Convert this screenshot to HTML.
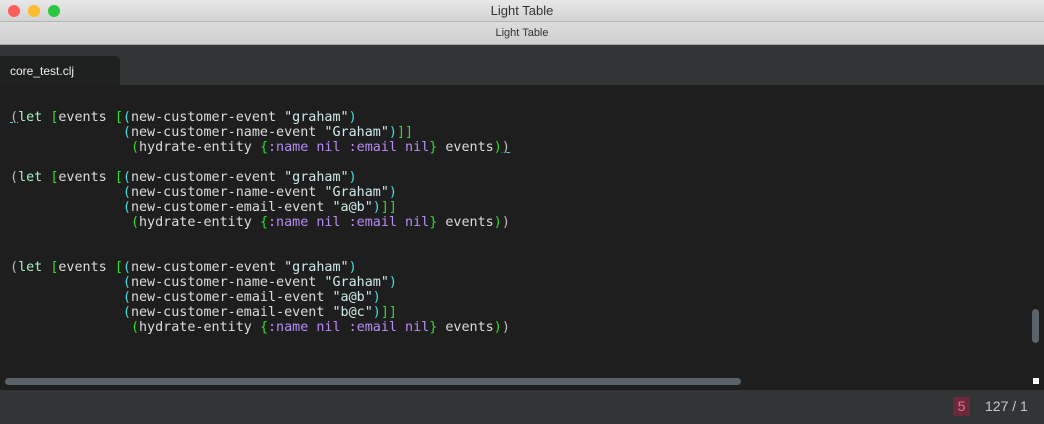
<!DOCTYPE html>
<html><head><style>
*{margin:0;padding:0;box-sizing:border-box}
body{width:1044px;height:424px;overflow:hidden;background:#1e1e1e;font-family:"Liberation Sans",sans-serif;position:relative}
.t1{position:absolute;left:0;top:0;width:1044px;height:22px;background:linear-gradient(#e8e8e8,#d3d3d3);border-bottom:1px solid #b5b5b5;text-align:center;font-size:13px;line-height:22px;color:#333}
.t2{position:absolute;left:0;top:22px;width:1044px;height:23px;background:linear-gradient(#dcdcdc,#cfcfcf);border-bottom:1px solid #a8a8a8;text-align:center;font-size:11px;line-height:23px;color:#333}
.dot{position:absolute;top:5px;width:12px;height:12px;border-radius:50%}
.tabbar{position:absolute;left:0;top:45px;width:1044px;height:40px;background:#313536}
.tab{position:absolute;left:0;top:11px;width:120px;height:29px;background:#1f2020;border-radius:0 5px 0 0;color:#eee;font-size:12px;padding:8px 0 0 10px}
.code{position:absolute;left:10px;top:110px;font-family:"DejaVu Sans Mono",monospace;font-size:13.4px;line-height:15px;color:#dcdcdc;white-space:pre}
.g{color:#2fdc2f}.c{color:#3fe0e0}.l{color:#a6f0c4}.s{color:#cfeaea}.p{color:#b88cf5}.w{color:#bbb}
.status{position:absolute;left:0;top:390px;width:1044px;height:34px;background:#313536}
</style></head><body>
<div class="t1">Light Table
<div class="dot" style="left:8px;background:#fc5f57"></div>
<div class="dot" style="left:28px;background:#fdbc2e"></div>
<div class="dot" style="left:48px;background:#29c840"></div></div>
<div class="t2">Light Table</div>
<div class="tabbar"><div class="tab">core_test.clj</div></div>
<div class="code"><span class="w" style="text-decoration:underline;text-decoration-color:#3fe0e0">(</span><span class="l">let</span> <span class="g">[</span>events <span class="g">[</span><span class="c">(</span>new-customer-event <span class="s">"graham"</span><span class="c">)</span>
              <span class="c">(</span>new-customer-name-event <span class="s">"Graham"</span><span class="c">)</span><span class="g">]]</span>
               <span class="g">(</span>hydrate-entity <span class="g">{</span><span class="p">:name nil :email nil</span><span class="g">}</span> events<span class="g">)</span><span class="w" style="text-decoration:underline;text-decoration-color:#3fe0e0">)</span>

<span class="w">(</span><span class="l">let</span> <span class="g">[</span>events <span class="g">[</span><span class="c">(</span>new-customer-event <span class="s">"graham"</span><span class="c">)</span>
              <span class="c">(</span>new-customer-name-event <span class="s">"Graham"</span><span class="c">)</span>
              <span class="c">(</span>new-customer-email-event <span class="s">"a@b"</span><span class="c">)</span><span class="g">]]</span>
               <span class="g">(</span>hydrate-entity <span class="g">{</span><span class="p">:name nil :email nil</span><span class="g">}</span> events<span class="g">)</span><span class="w">)</span>


<span class="w">(</span><span class="l">let</span> <span class="g">[</span>events <span class="g">[</span><span class="c">(</span>new-customer-event <span class="s">"graham"</span><span class="c">)</span>
              <span class="c">(</span>new-customer-name-event <span class="s">"Graham"</span><span class="c">)</span>
              <span class="c">(</span>new-customer-email-event <span class="s">"a@b"</span><span class="c">)</span>
              <span class="c">(</span>new-customer-email-event <span class="s">"b@c"</span><span class="c">)</span><span class="g">]]</span>
               <span class="g">(</span>hydrate-entity <span class="g">{</span><span class="p">:name nil :email nil</span><span class="g">}</span> events<span class="g">)</span><span class="w">)</span></div>
<div style="position:absolute;left:5px;top:378px;width:736px;height:7px;border-radius:4px;background:#5a626a"></div>
<div style="position:absolute;left:1032px;top:309px;width:7px;height:34px;border-radius:4px;background:#5a626a"></div>
<div style="position:absolute;left:1033px;top:378px;width:6px;height:6px;background:#fff"></div>
<div class="status">
<div style="position:absolute;left:953px;top:7px;width:17px;height:19px;background:#6a2a3c;color:#f07088;font-size:14px;text-align:center;line-height:19px">5</div>
<div style="position:absolute;left:985px;top:7px;color:#c8c8c8;font-size:14px;line-height:19px">127 / 1</div>
</div>
</body></html>
